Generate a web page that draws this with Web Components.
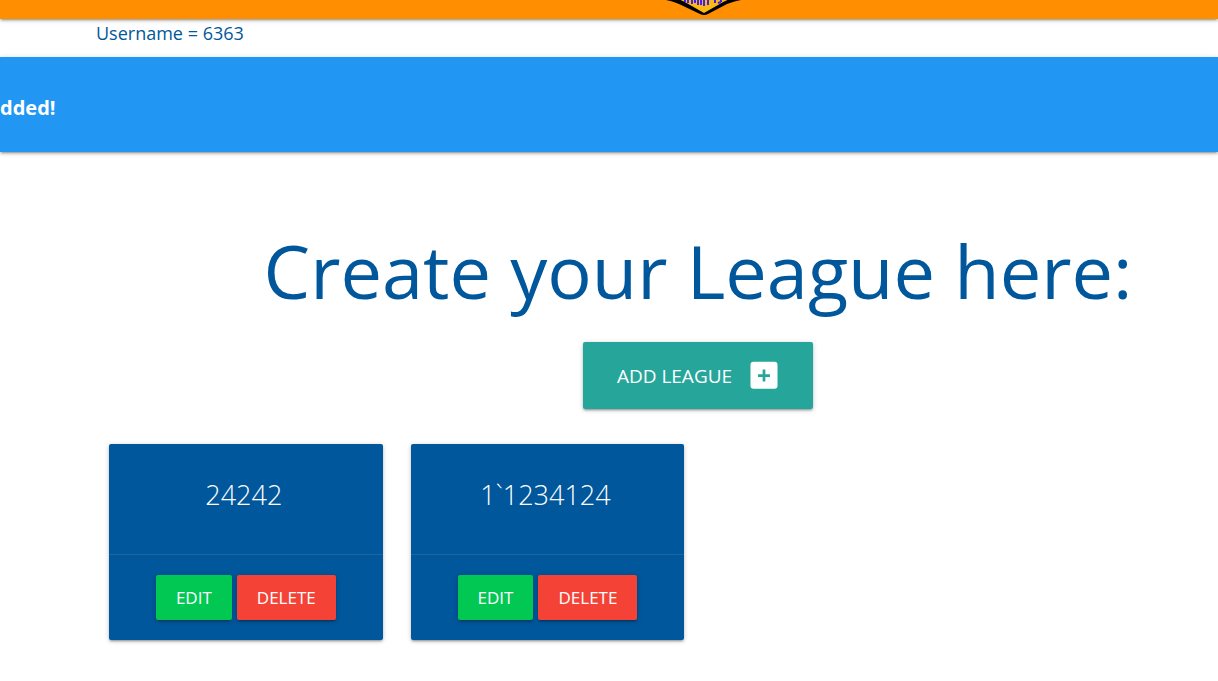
<!DOCTYPE html>
<html lang="en">
<head>
<meta charset="utf-8">
<meta name="viewport" content="width=device-width, initial-scale=1">
<title>Leagues</title>
<style>
body { margin: 0; background: #fff; color: #01579b; font-family: "Segoe UI", "Open Sans", "Noto Sans", sans-serif; }
</style>
</head>
<body>
<league-page>
  <nav-bar></nav-bar>
  <user-name>6363</user-name>
  <flash-message>dded!</flash-message>
  <league-board heading="Create your League here:">
    <league-card>24242</league-card>
    <league-card>1`1234124</league-card>
  </league-board>
</league-page>
<script>
const define = (name, html) => customElements.define(name, class extends HTMLElement {
  constructor() {
    super();
    const template = document.createElement('template');
    template.innerHTML = html;
    this.attachShadow({ mode: 'open' }).append(template.content.cloneNode(true));
  }
  connectedCallback() {
    const heading = this.shadowRoot.querySelector('h1');
    if (heading) heading.textContent = this.getAttribute('heading');
  }
});
const shadow = 'box-shadow: 0 2px 2px 0 rgba(0,0,0,.14), 0 3px 1px -2px rgba(0,0,0,.12), 0 1px 5px 0 rgba(0,0,0,.2);';

define('league-page', `
  <style>:host { display: block; }</style>
  <slot></slot>`);

define('nav-bar', `
  <style>
    :host { display: block; }
    header { display: flex; justify-content: center; height: 19px; padding-left: 190px; background: #ff8f00; ${shadow} }
    svg { display: block; width: 100px; height: 19px; }
  </style>
  <header>
    <svg viewBox="0 0 100 19" aria-hidden="true">
      <path d="M6-4 12 0Q18 1 25 4L46 14Q50 16 54 14L73 4Q81 1 87 0L93-4Z" fill="#000"/>
      <path d="M21-2Q28 0 36 5L50 13 64 5Q72 0 79-2Z" fill="#fdb913"/>
      <path d="M31-1v3M34-1v4M38-1v5M41-1v4M44-1v6M47-1v6M50-1v7M54-1v6M61-1v4M64 3l3-1M67-1v3" stroke="#3f20f5" stroke-width="2"/>
    </svg>
  </header>`);

define('user-name', `
  <style>
    :host { display: block; padding: 0 96px 9px; }
    p { margin: 0; font-size: 18px; line-height: 29px; }
  </style>
  <p>Username = <slot></slot></p>`);

define('flash-message', `
  <style>
    :host { display: block; background: #2196f3; color: #fff; ${shadow} }
    p { margin: 0; padding: 35px 0 29px; font-size: 20px; line-height: 31px; font-weight: 700; }
  </style>
  <p role="status"><slot></slot></p>`);

define('add-button', `
  <style>
    :host { display: block; }
    button { display: flex; align-items: center; gap: 14px; height: 67px; padding: 0 31px 0 34px; border: 0; border-radius: 2px; background: #26a69a; color: #fff; font: inherit; font-size: 19px; ${shadow} }
    svg { display: block; width: 36px; height: 36px; }
  </style>
  <button type="button"><slot></slot>
    <svg viewBox="0 0 24 24" fill="#fff" aria-hidden="true"><path d="M19 2.500H5a2 2 0 0 0-2 2v14a2 2 0 0 0 2 2h14a2 2 0 0 0 2-2V4.500a2 2 0 0 0-2-2zm-3 10.100h-3.100v3.100h-1.800v-3.100H8v-1.800h3.100V7.700h1.800v3.100H16z"/></svg>
  </button>`);

define('league-board', `
  <style>
    :host { display: block; padding: 63px 0 40px; }
    .intro { display: flex; flex-direction: column; align-items: center; gap: 15px; padding: 0 0 35px 178px; }
    h1 { margin: 0; font-size: 74px; line-height: 112px; font-weight: 400; text-align: center; }
    .cards { display: grid; grid-template-columns: repeat(3, 1fr); gap: 28px; padding: 0 232px 0 109px; }
  </style>
  <div class="intro">
    <h1></h1>
    <add-button>ADD LEAGUE</add-button>
  </div>
  <div class="cards"><slot></slot></div>`);

define('league-card', `
  <style>
    :host { display: block; border-radius: 2px; background: #01579b; color: #fff; ${shadow} }
    h2 { margin: 0; padding: 31px 28px 39px 24px; font-size: 27px; line-height: 40px; font-weight: 300; text-align: center; }
    .actions { display: flex; justify-content: center; gap: 5px; padding: 20px; border-top: 1px solid rgba(160,160,160,.2); }
    button { height: 45px; padding: 0 20px; border: 0; border-radius: 2px; color: #fff; font: inherit; font-size: 17px; ${shadow} }
    .edit { background: #00c853; }
    .delete { background: #f44336; }
  </style>
  <h2><slot></slot></h2>
  <div class="actions">
    <button class="edit" type="button">EDIT</button>
    <button class="delete" type="button">DELETE</button>
  </div>`);
</script>
</body>
</html>
